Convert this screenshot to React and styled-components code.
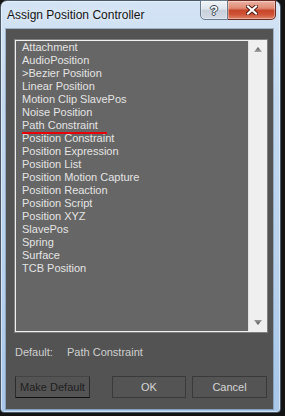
import React from "react";
import styled, { createGlobalStyle } from "styled-components";

const Global = createGlobalStyle`
  html, body { margin: 0; padding: 0; background: #141414; }
  body {
    width: 285px;
    height: 416px;
    overflow: hidden;
    font-family: "Liberation Sans", Arial, sans-serif;
  }
`;

const Dialog = styled.div`
  box-sizing: border-box;
  width: 281px;
  height: 413px;
  border: 1px solid #4a5868;
  border-radius: 7px 7px 4px 4px;
  background: linear-gradient(180deg, #d4e4f5 0%, #c3d9f0 25%, #b6d0ed 70%, #a8c6e9 100%);
  box-shadow: inset 0 0 0 1px rgba(255, 255, 255, 0.45);
  display: flex;
  flex-direction: column;
`;

const TitleBar = styled.div`
  height: 28px;
  display: flex;
  align-items: flex-start;
  padding-left: 6px;
`;

const Title = styled.div`
  flex: 1;
  font-size: 12px;
  line-height: 28px;
  color: #151515;
  text-shadow: 0 0 6px rgba(255, 255, 255, 0.9);
`;

const Caption = styled.div`
  display: flex;
  margin-right: 4px;
  margin-top: -1px;
`;

const CaptionButton = styled.div`
  box-sizing: border-box;
  height: 20px;
  width: ${(p) => (p.$close ? "48px" : "28px")};
  display: flex;
  align-items: center;
  justify-content: center;
  border: 1px solid ${(p) => (p.$close ? "#6a2c22" : "#6b7b8e")};
  border-left-width: ${(p) => (p.$close ? "0" : "1px")};
  border-radius: ${(p) => (p.$close ? "0 0 5px 0" : "0 0 0 5px")};
  background: ${(p) =>
    p.$close
      ? "linear-gradient(180deg, #ecb2a4 0%, #df8a73 40%, #c8462b 52%, #cf5337 75%, #e08668 100%)"
      : "linear-gradient(180deg, #f1f5f9 0%, #dde4ec 45%, #c7d0db 52%, #d3dce6 100%)"};
  box-shadow: inset 0 0 0 1px rgba(255, 255, 255, 0.35);
`;

const HelpGlyph = styled.span`
  font-weight: 700;
  font-size: 13px;
  line-height: 1;
  color: #fff;
  text-shadow: 0 0 1px #3b4654, 1px 0 0 #3b4654, -1px 0 0 #3b4654,
    0 1px 0 #3b4654, 0 -1px 0 #3b4654;
`;

const Client = styled.div`
  flex: 1;
  margin: 0 7px 3px 5px;
  background: #535353;
  box-shadow: 0 0 0 1px rgba(70, 90, 110, 0.35);
  padding: 10px 6px 0 8px;
  display: flex;
  flex-direction: column;
`;

const ListBox = styled.div`
  box-sizing: border-box;
  height: 292px;
  margin: 1px 0 1px 1px;
  border: 1px solid #f0f0f0;
  box-shadow: 0 0 0 1px #7f7f7f;
  display: flex;
`;

const Items = styled.ul`
  flex: 1;
  margin: 0;
  padding: 0 0 0 6px;
  list-style: none;
  background: #666666;
`;

const Item = styled.li`
  position: relative;
  font-size: 11px;
  line-height: 13px;
  height: 13px;
  color: #e4e4e4;
  white-space: nowrap;

  ${(p) =>
    p.$marked &&
    `
    &::after {
      content: "";
      position: absolute;
      left: 0;
      top: 13px;
      width: 85px;
      height: 2px;
      background: #e6000a;
    }
  `}
`;

const ScrollBar = styled.div`
  width: 17px;
  background: #efefef;
  border-left: 1px solid #e2e2e2;
  display: flex;
  flex-direction: column;
  justify-content: space-between;
`;

const Arrow = styled.div`
  height: 17px;
  display: flex;
  align-items: center;
  justify-content: center;
`;

const DefaultRow = styled.div`
  margin-top: 13px;
  padding-left: 1px;
  display: flex;
  font-size: 11px;
  line-height: 13px;
  color: #cfcfcf;
`;

const DefaultLabel = styled.span`
  width: 52px;
`;

const ButtonRow = styled.div`
  margin-top: 17px;
  padding-left: 1px;
  display: flex;
`;

const Button = styled.div`
  box-sizing: border-box;
  height: 22px;
  width: ${(p) => p.$w}px;
  margin-left: ${(p) => p.$ml || 0}px;
  margin-right: ${(p) => (p.$push ? "auto" : "0")};
  display: flex;
  align-items: center;
  justify-content: center;
  font-size: 11px;
  background: #545454;
  color: ${(p) => (p.$dim ? "#1e1e1e" : "#d6d6d6")};
  border: 1px solid ${(p) => (p.$dim ? "#2c2c2c" : "#3a3a3a")};
  border-top-color: ${(p) => (p.$dim ? "#444" : "#3a3a3a")};
  border-bottom-color: ${(p) => (p.$dim ? "#121212" : "#3a3a3a")};
`;

const items = [
  "Attachment",
  "AudioPosition",
  ">Bezier Position",
  "Linear Position",
  "Motion Clip SlavePos",
  "Noise Position",
  "Path Constraint",
  "Position Constraint",
  "Position Expression",
  "Position List",
  "Position Motion Capture",
  "Position Reaction",
  "Position Script",
  "Position XYZ",
  "SlavePos",
  "Spring",
  "Surface",
  "TCB Position",
];

const Tri = ({ down }) => (
  <svg width="8" height="5" viewBox="0 0 8 5">
    <defs>
      <linearGradient id={down ? "gd" : "gu"} x1="0" y1="0" x2="0" y2="1">
        <stop offset="0" stopColor={down ? "#9a9a9a" : "#555"} />
        <stop offset="1" stopColor={down ? "#555" : "#a8a8a8"} />
      </linearGradient>
    </defs>
    <polygon
      points={down ? "0,0 8,0 4,5" : "4,0 8,5 0,5"}
      fill={`url(#${down ? "gd" : "gu"})`}
    />
  </svg>
);

const CloseGlyph = () => (
  <svg width="12" height="10" viewBox="0 0 12 10">
    <path d="M2 1.5 L10 8.5 M10 1.5 L2 8.5" stroke="#4a1810" strokeWidth="4" strokeLinecap="square" />
    <path d="M2 1.5 L10 8.5 M10 1.5 L2 8.5" stroke="#fff" strokeWidth="2.2" strokeLinecap="square" />
  </svg>
);

export default function App() {
  return (
    <>
      <Global />
      <Dialog>
        <TitleBar>
          <Title>Assign Position Controller</Title>
          <Caption>
            <CaptionButton>
              <HelpGlyph>?</HelpGlyph>
            </CaptionButton>
            <CaptionButton $close>
              <CloseGlyph />
            </CaptionButton>
          </Caption>
        </TitleBar>
        <Client>
          <ListBox>
            <Items>
              {items.map((t) => (
                <Item key={t} $marked={t === "Path Constraint"}>
                  {t}
                </Item>
              ))}
            </Items>
            <ScrollBar>
              <Arrow>
                <Tri />
              </Arrow>
              <Arrow>
                <Tri down />
              </Arrow>
            </ScrollBar>
          </ListBox>
          <DefaultRow>
            <DefaultLabel>Default:</DefaultLabel>
            <span>Path Constraint</span>
          </DefaultRow>
          <ButtonRow>
            <Button $w={75} $push $dim>
              Make Default
            </Button>
            <Button $w={74}>OK</Button>
            <Button $w={75} $ml={6}>
              Cancel
            </Button>
          </ButtonRow>
        </Client>
      </Dialog>
    </>
  );
}
